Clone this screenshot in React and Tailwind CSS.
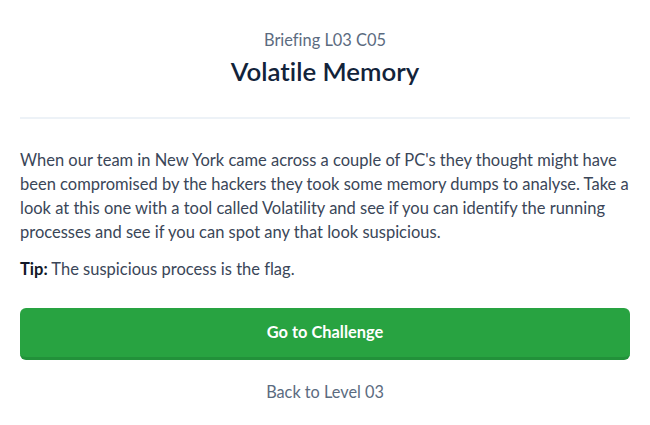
export default function App() {
  return (
    <div className="w-[650px] h-[425px] bg-white px-5 pt-[30px] [font-variant-ligatures:none]" style={{ fontFamily: 'Lato, "Open Sans", sans-serif' }}>
      <div className="text-center">
        <div className="text-[16.4px] leading-5 text-[#5b6b7f]">Briefing L03 C05</div>
        <h1 className="mt-[5px] text-[25.8px] leading-8 font-semibold text-[#12233a]">Volatile Memory</h1>
      </div>
      <div className="mt-[30px] h-[2px] bg-[#edf2f7]" />
      <p className="mt-[29px] text-[16.5px] leading-6 text-[#3a4658]">
        When our team in New York came across a couple of PC's they thought might have been compromised by the hackers they took some memory dumps to analyse. Take a look at this one with a tool called Volatility and see if you can identify the running processes and see if you can spot any that look suspicious.
      </p>
      <p className="mt-[13px] text-[16.5px] leading-6 text-[#3a4658]">
        <span className="font-bold text-[#111827]">Tip:</span> The suspicious process is the flag.
      </p>
      <button className="mt-[27px] w-full h-[52px] rounded-md bg-[#28a341] border-b-[3px] border-[#22913a] text-white text-[16.4px] font-bold">
        Go to Challenge
      </button>
      <div className="mt-[20px] text-center text-[16.3px] leading-6 text-[#5b6b7f]">Back to Level 03</div>
    </div>
  );
}
